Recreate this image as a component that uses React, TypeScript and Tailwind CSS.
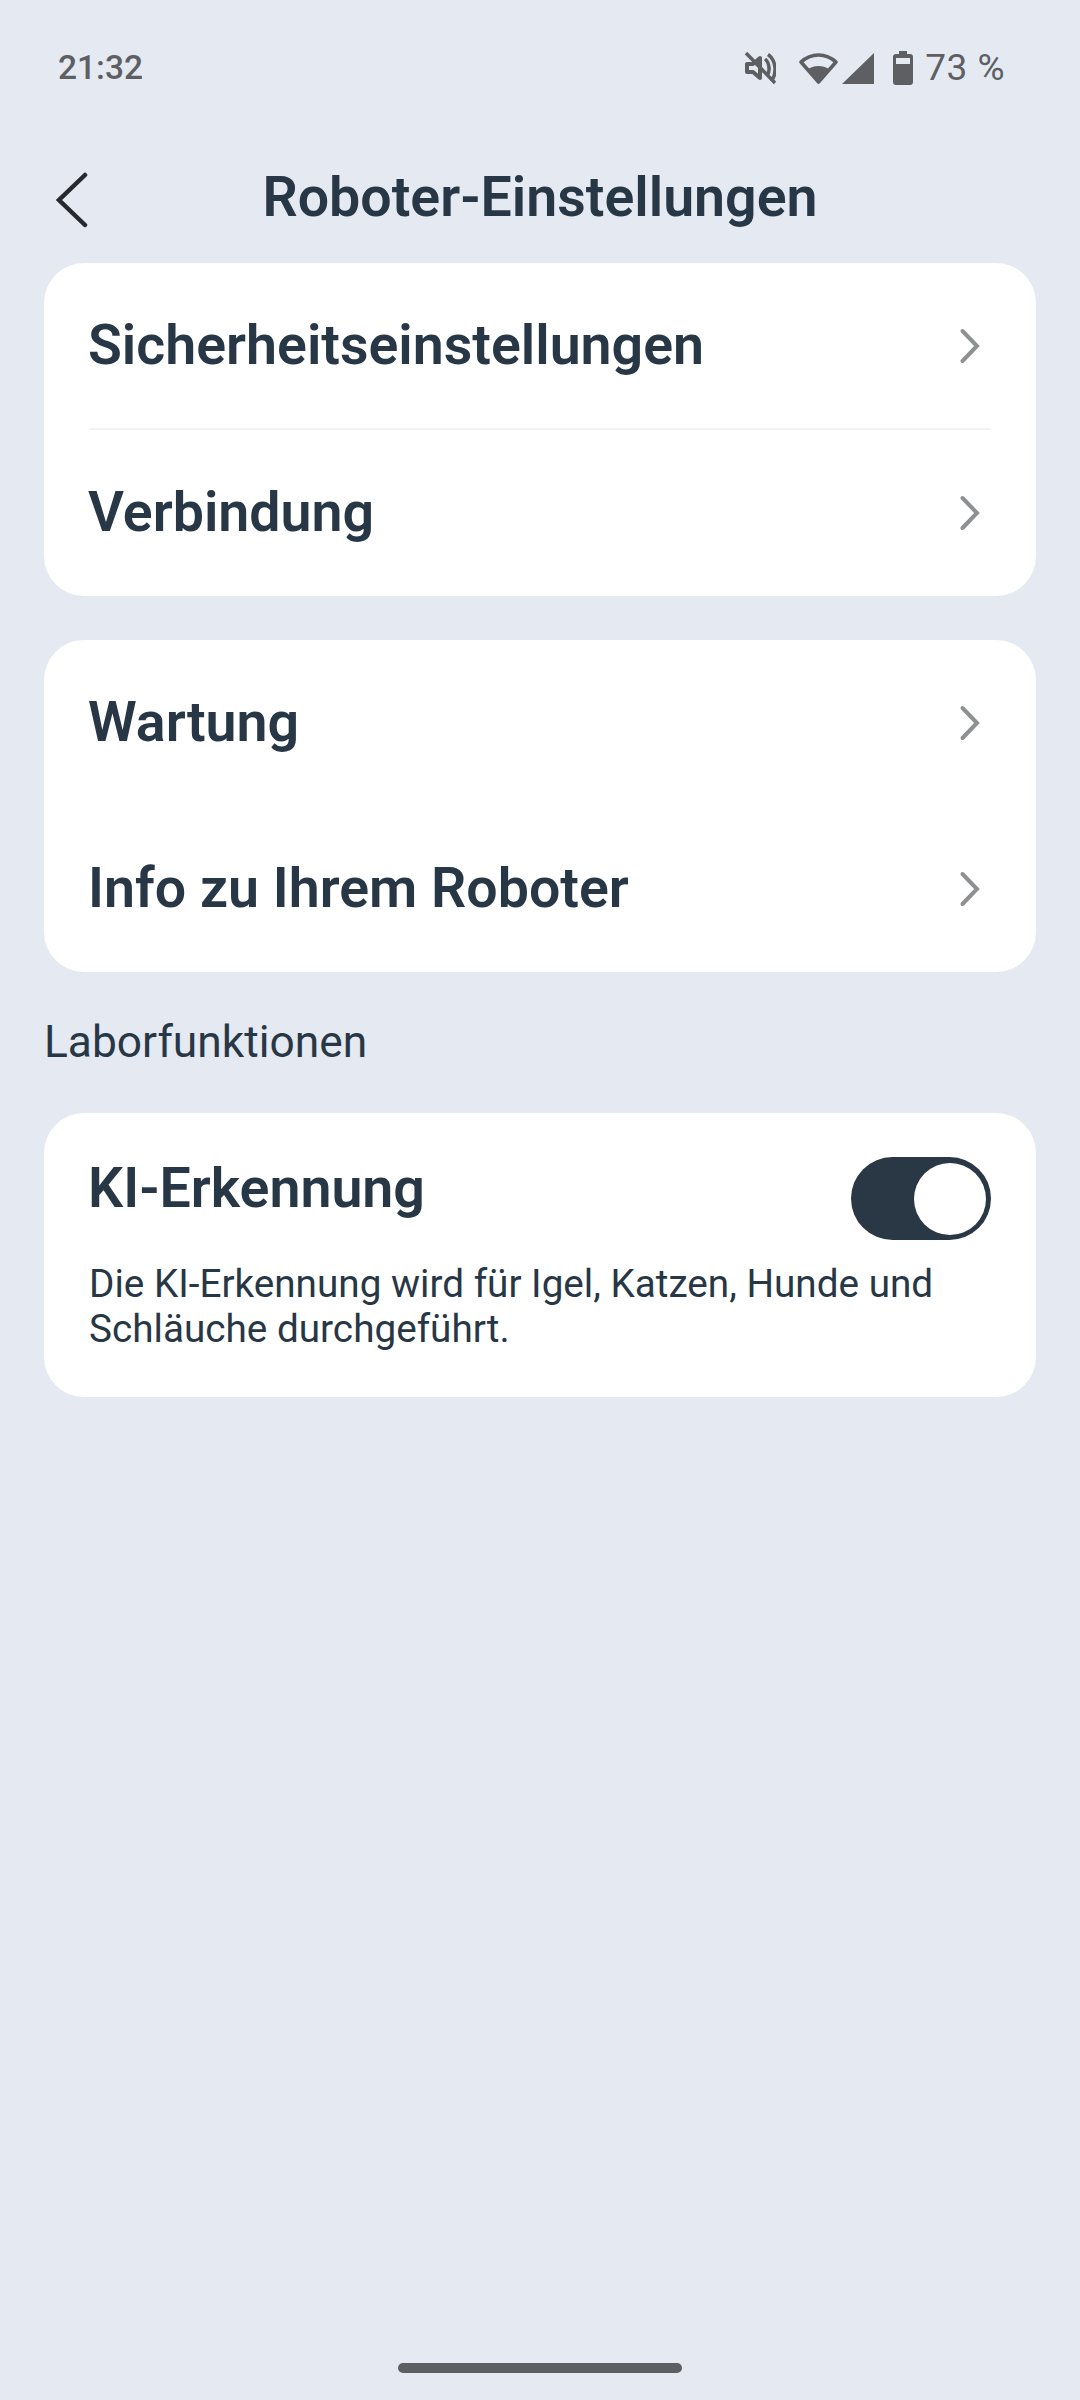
const Chevron = () => (
  <svg width="24" height="36" viewBox="0 0 24 36" fill="none" className="shrink-0">
    <path d="M4.5 3 L19 18 L4.5 33" stroke="#8e9092" strokeWidth="4" strokeLinecap="round" strokeLinejoin="miter" />
  </svg>
);

const Row = ({ label, tall }: { label: string; tall?: boolean }) => (
  <div className={tall ? "flex h-[166px] items-center justify-between pl-[44px] pr-[54px]" : "flex h-[165px] items-center justify-between pl-[44px] pr-[54px]"}>
    <span className="text-[55.5px] leading-[60px] font-semibold text-[#283746]">{label}</span>
    <Chevron />
  </div>
);

export default function App() {
  return (
    <div className="flex h-[2400px] w-[1080px] flex-col bg-[#e5e9f1] font-['Roboto',sans-serif]">
      <div className="flex h-[134px] items-start justify-between pl-[58px] pr-[75px] pt-[46px]">
        <span className="text-[33.5px] leading-[44px] font-medium text-[#5d5f63]">21:32</span>
        <div className="flex items-center">
          <svg width="31" height="32" viewBox="0 0 31 32" fill="none" className="mr-[23px]">
            <path d="M2 12 H8 L15 6 V26 L8 20 H2 Z" stroke="#5d5f63" strokeWidth="4" strokeLinejoin="round" />
            <path d="M20 7 C25 11 25 20 22 24 M23 2.5 C31 8 32 21 27 28" stroke="#5d5f63" strokeWidth="3.5" />
            <path d="M1 1 L30 31" stroke="#5d5f63" strokeWidth="3.5" />
          </svg>
          <svg width="75" height="34" viewBox="0 0 75 34" className="mr-[19px]">
            <path d="M19.5 31 L2 11 C12 1.500 27 1.500 37 11 Z" fill="none" stroke="#5d5f63" strokeWidth="3.5" strokeLinejoin="round" />
            <path d="M19.5 33 L8 19 C14 13.500 25 13.500 31 19 Z" fill="#5d5f63" />
            <path d="M43 33 L75 2 V33 Z" fill="#5d5f63" />
          </svg>
          <svg width="20" height="34" viewBox="0 0 20 34" className="mr-[12px]">
            <path d="M6 0 H14 V3 H17 Q20 3 20 6 V31 Q20 34 17 34 H3 Q0 34 0 31 V6 Q0 3 3 3 H6 Z M3 7 V13 H17 V7 Z" fill="#5d5f63" fillRule="evenodd" />
          </svg>
          <span className="text-[37px] leading-[44px] tracking-[0.5px] text-[#5d5f63]">73 %</span>
        </div>
      </div>

      <div className="relative flex h-[129px] items-start justify-center">
        <svg width="34" height="60" viewBox="0 0 34 60" fill="none" className="absolute left-[56px] top-[36px]">
          <path d="M29 5 L3 30 L29 55" stroke="#26292d" strokeWidth="4.5" strokeLinecap="round" />
        </svg>
        <h1 className="pt-[34px] text-[55.5px] leading-[60px] font-semibold text-[#283746]">Roboter-Einstellungen</h1>
      </div>

      <div className="flex flex-col px-[44px]">
        <div className="flex flex-col rounded-[40px] bg-white">
          <Row label="Sicherheitseinstellungen" />
          <div className="mx-[45px] h-[2px] bg-[#f3f3f5]" />
          <Row label="Verbindung" tall />
        </div>

        <div className="mt-[44px] flex flex-col rounded-[40px] bg-white">
          <Row label="Wartung" />
          <div className="h-px" />
          <Row label="Info zu Ihrem Roboter" tall />
        </div>

        <div className="mt-[45px] text-[44.3px] leading-[50px] text-[#283746]">Laborfunktionen</div>

        <div className="mt-[46px] flex flex-col rounded-[40px] bg-white pb-[46px] pl-[44px] pr-[45px] pt-[44px]">
          <div className="flex items-start justify-between">
            <span className="text-[55.5px] leading-[64px] font-semibold text-[#283746]">KI-Erkennung</span>
            <div className="flex h-[83px] w-[140px] items-center justify-end rounded-full bg-[#2a3845] pr-[5px]">
              <div className="h-[72px] w-[72px] rounded-full bg-white" />
            </div>
          </div>
          <p className="ml-px mt-[21px] text-[38.7px] leading-[45px] text-[#283746]">
            Die KI-Erkennung wird für Igel, Katzen, Hunde und
            <br />
            Schläuche durchgeführt.
          </p>
        </div>
      </div>

      <div className="mt-auto mb-[27px] h-[10px] w-[284px] self-center rounded-full bg-[#5d5f63]" />
    </div>
  );
}
